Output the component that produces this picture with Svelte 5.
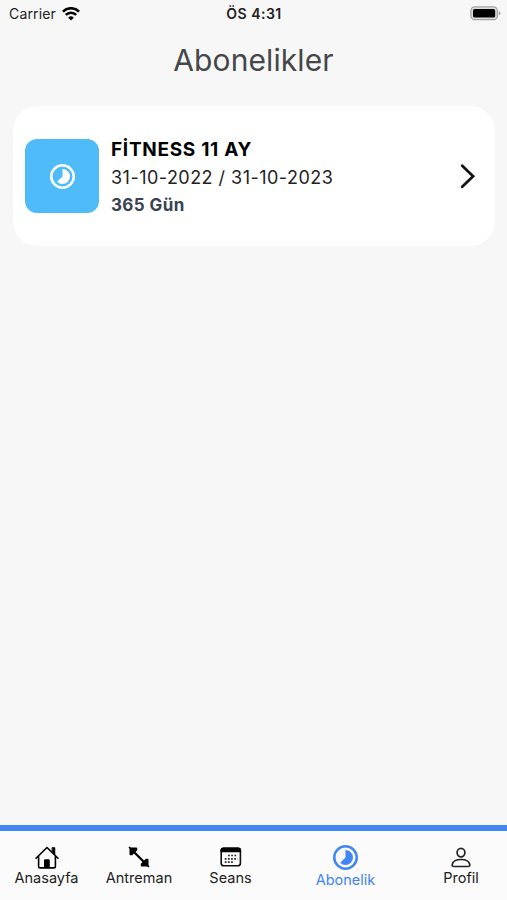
<script lang="ts">
  interface Tab {
    id: string;
    label: string;
  }

  const tabs: Tab[] = [
    { id: 'home', label: 'Anasayfa' },
    { id: 'workout', label: 'Antreman' },
    { id: 'session', label: 'Seans' },
    { id: 'subscription', label: 'Abonelik' },
    { id: 'profile', label: 'Profil' },
  ];

  const subscriptions = [
    { name: 'FİTNESS 11 AY', start: '31-10-2022', end: '31-10-2023', days: 365 },
  ];

  let active = $state('subscription');
</script>

{#snippet timelapse()}
  <svg class="timelapse" viewBox="2 2 20 20" fill="currentColor" aria-hidden="true">
    <path d="M16.24 7.76A5.97 5.97 0 0 0 12 6v6l-4.24 4.24a6 6 0 0 0 8.49 0 6 6 0 0 0-.01-8.48zM12 2a10 10 0 1 0 0 20 10 10 0 0 0 0-20zm0 18a8 8 0 1 1 0-16 8 8 0 0 1 0 16z" />
  </svg>
{/snippet}

<div class="screen">
  <div class="status">
    <div class="carrier">
      <span>Carrier</span>
      <svg width="18" height="14" viewBox="0 0 18 14" fill="none" stroke="#000" stroke-width="2.6" aria-hidden="true">
        <path d="M.9 4.6a11.5 11.5 0 0 1 16.2 0M3.8 7.900a7.4 7.4 0 0 1 10.4 0" />
        <path d="M9 13.500 6.2 10.700a4 4 0 0 1 5.6 0z" fill="#000" stroke="none" />
      </svg>
    </div>
    <span class="time">ÖS 4:31</span>
    <svg class="battery" width="31" height="15" viewBox="0 0 31 15" aria-hidden="true">
      <rect x=".9" y=".9" width="26.4" height="12.8" rx="3.8" fill="#dedede" stroke="#a5a5a5" stroke-width="1.3" />
      <rect x="3" y="3" width="22.2" height="8.6" rx="1.7" fill="#000" />
      <path d="M28.7 5v4.6c2.4-1 2.4-3.6 0-4.6z" fill="#a5a5a5" />
    </svg>
  </div>

  <h1>Abonelikler</h1>

  <main>
    {#each subscriptions as sub}
      <button type="button" class="card">
        <span class="tile">{@render timelapse()}</span>
        <span class="info">
          <span class="name">{sub.name}</span>
          <span class="dates">{sub.start} / {sub.end}</span>
          <span class="days">{sub.days} Gün</span>
        </span>
        <svg class="chevron" width="16" height="26" viewBox="0 0 16 26" fill="none" stroke="#151515" stroke-width="2.8" stroke-linecap="round" aria-hidden="true">
          <path d="m2.200 2.800 10.900 10.500L2.200 23.800" />
        </svg>
      </button>
    {/each}
  </main>

  <nav>
    {#each tabs as tab (tab.id)}
      <button
        type="button"
        class="tab {tab.id}"
        class:active={active === tab.id}
        onclick={() => (active = tab.id)}
      >
        <span class="icon">
          {#if tab.id === 'home'}
            <svg width="24" height="23" viewBox="0 0 24 23" fill="none" stroke="#000" stroke-width="1.6" stroke-linecap="round" stroke-linejoin="round" aria-hidden="true">
              <path d="M1 12.2 12 1.5l11 10.7M3.6 10v10.2c0 1 .7 1.7 1.7 1.7h13.4c1 0 1.7-.7 1.7-1.7V10" />
              <path d="M17.4 1.7h2.4v7.200l-2.400-2.500z" fill="#000" stroke-width=".9" />
              <path d="M9.9 13.800h4.300v7.800H9.900z" fill="#000" stroke-width="1" />
            </svg>
          {:else if tab.id === 'workout'}
            <svg width="22" height="22" viewBox="0 0 22 22" fill="none" stroke="#000" stroke-linejoin="round" aria-hidden="true">
              <path d="m5 5 12 12" stroke-width="2.2" />
              <path d="M2.500 2.500h5.700v1.200L3.700 8.200H2.500zM19.500 19.500h-5.700v-1.200l4.500-4.500h1.200z" fill="#000" stroke-width="2" />
              <path d="m1 1 3 3M18 18l3 3" stroke-width="1.6" />
            </svg>
          {:else if tab.id === 'session'}
            <svg width="22" height="20" viewBox="0 0 22 20" fill="none" aria-hidden="true">
              <rect x="1.2" y="1.2" width="19.2" height="17.6" rx="2.6" stroke="#111" stroke-width="1.6" />
              <path d="M.5 5.3V3.400A3 3 0 0 1 3.500.4h14.600a3 3 0 0 1 3 3v1.900z" fill="#000" />
              <path d="M8.1 8.500h9.500M4.800 11.800h12.800M4.800 15.100h9.500" stroke="#222" stroke-width="1.7" stroke-dasharray="1.7 1.45" />
            </svg>
          {:else if tab.id === 'subscription'}
            {@render timelapse()}
          {:else}
            <svg width="20" height="21" viewBox="0 0 20 21" fill="none" stroke="#222" stroke-width="1.7" aria-hidden="true">
              <ellipse cx="10" cy="5.600" rx="3.900" ry="4.300" />
              <path d="M3 19.500c-1.400 0-2-.7-1.800-2 .6-3 4.100-5 8.800-5s8.200 2 8.800 5c.2 1.300-.4 2-1.800 2z" />
            </svg>
          {/if}
        </span>
        <span class="label">{tab.label}</span>
      </button>
    {/each}
  </nav>
</div>

<style>
  :global(body) {
    margin: 0;
  }

  .screen {
    display: flex;
    flex-direction: column;
    height: 100vh;
    background: #f7f7f7;
    color: #000;
    font-family: Inter, 'Liberation Sans', sans-serif;
  }

  button {
    border: none;
    padding: 0;
    font-family: inherit;
    color: inherit;
    cursor: pointer;
  }

  svg {
    display: block;
    flex: none;
  }

  .status {
    display: grid;
    grid-template-columns: 1fr auto 1fr;
    align-items: center;
    height: 27px;
    padding: 0 6px 0 7px;
    font-size: 14px;
    color: #222;
  }

  .carrier {
    display: flex;
    align-items: center;
    gap: 6px;
    padding-left: 2px;
    letter-spacing: 0.15px;
  }

  .time {
    font-size: 14px;
    font-weight: 600;
    letter-spacing: 0.5px;
  }

  .battery {
    justify-self: end;
  }

  h1 {
    margin: 15px 0 0;
    height: 36px;
    line-height: 36px;
    text-align: center;
    font-size: 30px;
    font-weight: 400;
    letter-spacing: 0.1px;
    color: #454749;
  }

  main {
    flex: 1;
    padding: 28px 12px 0 13px;
  }

  .card {
    display: flex;
    align-items: center;
    width: 100%;
    height: 140px;
    padding: 0 19px 0 12px;
    border-radius: 25px;
    background: #fff;
    text-align: left;
  }

  .tile {
    display: flex;
    align-items: center;
    justify-content: center;
    width: 74px;
    height: 74px;
    border-radius: 12px;
    background: #4fbcf9;
    color: #fff;
  }

  .tile .timelapse {
    width: 25px;
    height: 25px;
  }

  .info {
    display: flex;
    flex: 1;
    flex-direction: column;
    margin-left: 12px;
    padding-top: 2px;
    line-height: 28px;
    white-space: nowrap;
  }

  .name {
    font-size: 19px;
    font-weight: 700;
    letter-spacing: 0.7px;
  }

  .dates {
    font-size: 18px;
    letter-spacing: 0.47px;
    color: #222;
  }

  .days {
    line-height: 27px;
    font-size: 17px;
    font-weight: 700;
    letter-spacing: 0.4px;
    color: #384252;
  }

  nav {
    display: grid;
    grid-template-columns: 93px 92px 91px 139px 92px;
    height: 69px;
    border-top: 6px solid #4285f4;
    background: #fbfbfb;
  }

  .tab {
    display: flex;
    flex-direction: column;
    align-items: center;
    padding-top: 13px;
    background: none;
  }

  .icon {
    display: flex;
    align-items: center;
    justify-content: center;
    height: 26px;
  }

  .tab .timelapse {
    width: 25px;
    height: 25px;
  }

  .label {
    line-height: 16px;
    font-size: 14.5px;
    color: #222;
  }

  .active .label {
    margin-top: 2px;
  }

  .active,
  .active .label {
    color: #4285f4;
  }
</style>
